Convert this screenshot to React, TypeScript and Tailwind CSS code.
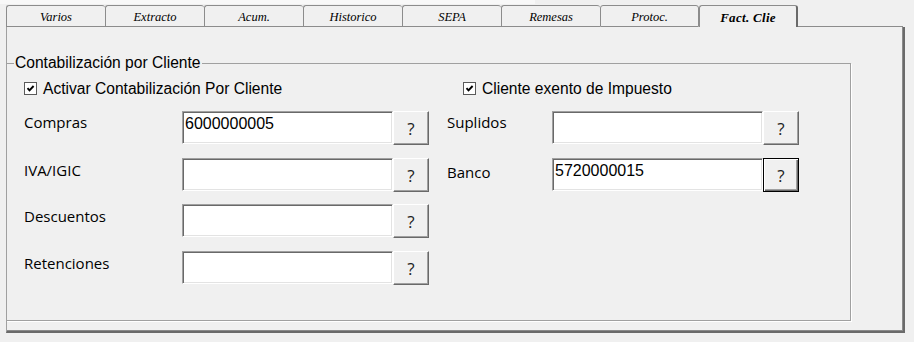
const SYS = "font-['Liberation_Sans',Arial,sans-serif]";

const tabs = ["Varios", "Extracto", "Acum.", "Historico", "SEPA", "Remesas", "Protoc."];

const CheckBox = ({ label }: { label: string }) => (
  <div className="flex h-[13px] items-center">
    <div className="flex h-[13px] w-[13px] items-center justify-center border border-[#5a5a5a] bg-white">
      <svg width="9" height="9" viewBox="0 0 9 9">
        <polyline points="1.5,4.2 3.5,6.4 7.6,2" fill="none" stroke="#000" strokeWidth="1.9" />
      </svg>
    </div>
    <span className={`ml-[6px] whitespace-nowrap text-[15.6px] leading-[18px] text-black ${SYS}`}>{label}</span>
  </div>
);

const HelpButton = ({ focused }: { focused?: boolean }) => (
  <div
    className={`flex h-[34px] w-[36px] items-center justify-center bg-[#f0f0f0] pt-px text-[17px] leading-[20px] text-[#222] font-['Open_Sans','Noto_Sans',sans-serif] ${
      focused
        ? "border border-black shadow-[inset_1px_1px_0_#fff,inset_-1px_-1px_0_#696969,inset_-2px_-2px_0_#a0a0a0]"
        : "border border-t-white border-l-white border-r-[#696969] border-b-[#696969] shadow-[inset_-1px_-1px_0_#a0a0a0]"
    }`}
  >
    ?
  </div>
);

interface RowProps {
  label: string;
  value?: string;
  labelWidth: string;
  focused?: boolean;
  labelOffset?: string;
  className?: string;
}

const Row = ({ label, value, labelWidth, focused, labelOffset = "pt-px", className = "" }: RowProps) => (
  <div className={`flex items-start ${className}`}>
    <div className={`${labelWidth} ${labelOffset} text-[15px] leading-[20px] text-black font-['Open_Sans','Noto_Sans',sans-serif]`}>
      {label}
    </div>
    <div
      className={`h-[33px] w-[211px] border border-t-[#a0a0a0] border-l-[#a0a0a0] border-r-white border-b-white bg-white pl-[2px] pt-[3px] text-[16px] leading-[18px] text-black shadow-[inset_1px_1px_0_#696969,inset_-1px_-1px_0_#e3e3e3] ${SYS}`}
    >
      {value}
    </div>
    <HelpButton focused={focused} />
  </div>
);

export default function App() {
  return (
    <div className="h-[342px] w-[914px] overflow-hidden bg-[#f0f0f0]">
      <div className="h-[4px] w-[535px] bg-[#f8f8f8]" />

      {/* --- Tabs --- */}
      <div className="mt-px flex pl-[6px]">
        {tabs.map((t) => (
          <div
            key={t}
            className={`flex h-[22px] w-[99px] items-center justify-center rounded-t-[3px] border-t border-l border-b border-[#8c8c8c] pt-[2px] text-[12.5px] italic text-black font-['Liberation_Serif','Times_New_Roman',serif] ${
              t === "Protoc." ? "border-r" : ""
            }`}
          >
            {t}
          </div>
        ))}
        <div className="flex h-[22px] w-[99px] items-center justify-center rounded-t-[3px] border-t border-l border-r-2 border-[#8c8c8c] border-r-[#6a6a6a] pt-[2px] text-[13px] font-bold italic tracking-[0.3px] text-black font-['Liberation_Serif','Times_New_Roman',serif]">
          Fact. Clie
        </div>
        <div className="h-[22px] w-[105px] border-b border-[#8c8c8c]" />
      </div>

      {/* --- Panel --- */}
      <div className="ml-[6px] flex h-[306px] w-[899px] flex-col border-l border-r-2 border-b-2 border-[#6a6a6a] border-l-[#a0a0a0] shadow-[inset_-1px_-1px_0_#8a8a8a]">
        <div className="relative -ml-px mt-[36px] h-[258px] w-[845px] border border-[#a0a0a0] shadow-[1px_1px_0_#fff]">
          <span className={`absolute left-[7px] top-[-10px] bg-[#f0f0f0] px-px text-[15.6px] leading-[18px] text-black ${SYS}`}>
            Contabilización por Cliente
          </span>

          <div className="flex pl-[17px] pt-[18px]">
            {/* Left column */}
            <div className="w-[423px]">
              <CheckBox label="Activar Contabilización Por Cliente" />
              <Row className="mt-[16px]" label="Compras" value="6000000005" labelWidth="w-[158px]" />
              <Row className="mt-[13px]" label="IVA/IGIC" labelWidth="w-[158px]" labelOffset="pt-[2px]" />
              <Row className="mt-[12px]" label="Descuentos" labelWidth="w-[158px]" labelOffset="pt-[2px]" />
              <Row className="mt-[13px]" label="Retenciones" labelWidth="w-[158px]" labelOffset="pt-[2px]" />
            </div>

            {/* Right column */}
            <div>
              <div className="pl-[16px]">
                <CheckBox label="Cliente exento de Impuesto" />
              </div>
              <Row className="mt-[16px]" label="Suplidos" labelWidth="w-[105px]" />
              <Row
                className="mt-[13px]"
                label="Banco"
                value="5720000015"
                labelWidth="w-[105px]"
                labelOffset="pt-[4px]"
                focused
              />
            </div>
          </div>
        </div>
      </div>
    </div>
  );
}
